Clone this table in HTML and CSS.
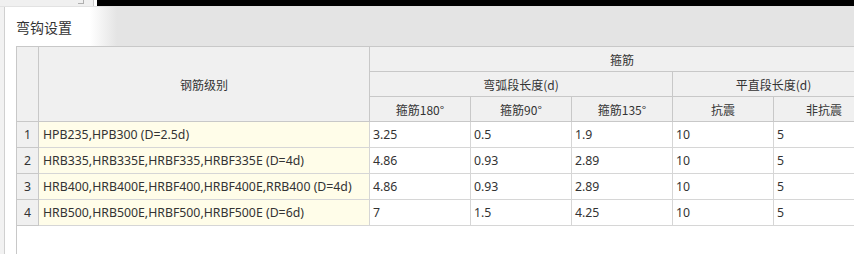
FILE: index.html
```html
<!DOCTYPE html>
<html lang="zh-CN">
<head>
<meta charset="utf-8">
<title>弯钩设置</title>
<link rel="stylesheet" href="styles.css">
</head>
<body>
<div class="topbar">
  <div class="topbar-left"><span class="topbar-mark"></span></div>
  <div class="topbar-dark"></div>
</div>
<div class="frame">
  <div class="side"></div>
  <div class="dialog">
    <div class="dialog-head"><span class="dialog-title">弯钩设置</span></div>
    <div class="grid-wrap">
      <table class="grid">
        <colgroup>
          <col class="c-num"><col class="c-name"><col class="c-val"><col class="c-val"><col class="c-val"><col class="c-val"><col class="c-val">
        </colgroup>
        <thead>
          <tr class="hrow">
            <th rowspan="3" class="hcorner"></th>
            <th rowspan="3">钢筋级别</th>
            <th colspan="5">箍筋</th>
          </tr>
          <tr class="hrow">
            <th colspan="3">弯弧段长度(d)</th>
            <th colspan="2">平直段长度(d)</th>
          </tr>
          <tr class="hrow">
            <th>箍筋180°</th>
            <th>箍筋90°</th>
            <th>箍筋135°</th>
            <th>抗震</th>
            <th>非抗震</th>
          </tr>
        </thead>
        <tbody>
          <tr><td class="num">1</td><td class="name">HPB235,HPB300 (D=2.5d)</td><td>3.25</td><td>0.5</td><td>1.9</td><td>10</td><td>5</td></tr>
          <tr><td class="num">2</td><td class="name">HRB335,HRB335E,HRBF335,HRBF335E (D=4d)</td><td>4.86</td><td>0.93</td><td>2.89</td><td>10</td><td>5</td></tr>
          <tr><td class="num">3</td><td class="name">HRB400,HRB400E,HRBF400,HRBF400E,RRB400 (D=4d)</td><td>4.86</td><td>0.93</td><td>2.89</td><td>10</td><td>5</td></tr>
          <tr><td class="num">4</td><td class="name">HRB500,HRB500E,HRBF500,HRBF500E (D=6d)</td><td>7</td><td>1.5</td><td>4.25</td><td>10</td><td>5</td></tr>
        </tbody>
      </table>
    </div>
  </div>
</div>
</body>
</html>
```

FILE: styles.css
```css
html, body {
  margin: 0;
  padding: 0;
  width: 854px;
  height: 254px;
  overflow: hidden;
  background: #ffffff;
  font-family: "Noto Sans", "Noto Sans CJK SC", sans-serif;
  color: #333333;
}

.topbar {
  display: flex;
  height: 6px;
  border-bottom: 1px solid #e2e2e2;
}

.topbar-left {
  width: 93px;
  background: #f0f0f0;
  border-right: 1px solid #c8c8c8;
  position: relative;
}

.topbar-mark {
  position: absolute;
  left: 78px;
  top: 0;
  width: 5px;
  height: 3px;
  border-bottom: 1px solid #b0b0b0;
  border-right: 1px solid #b0b0b0;
}

.topbar-dark {
  flex: 1;
  margin-left: 3px;
  background: #000000;
}

.frame {
  display: flex;
  height: 247px;
}

.side {
  width: 4px;
  background: #f2f2f2;
  border-right: 1px solid #d0d0d0;
  flex: none;
}

.dialog {
  flex: 1;
  display: flex;
  flex-direction: column;
  min-width: 0;
}

.dialog-head {
  height: 39px;
  display: flex;
  align-items: center;
  padding-left: 11px;
  background: linear-gradient(to right, #ffffff 85px, #e4e4e4 112px);
}

.dialog-title {
  font-family: "Noto Sans CJK SC", sans-serif;
  font-size: 14px;
  color: #333333;
}

.grid-wrap {
  flex: 1;
  margin-left: 11px;
  border-left: 1px solid #c8c8c8;
  border-top: 1px solid #c8c8c8;
  overflow: hidden;
}

.grid {
  border-collapse: collapse;
  table-layout: fixed;
  width: 858px;
  margin-top: -1px;
  margin-left: -1px;
  font-size: 12.3px;
}

.c-num { width: 22px; }
.c-name { width: 331px; }
.c-val { width: 101px; }

.grid th {
  background: #f0f0f0;
  border: 1px solid #c8c8c8;
  font-weight: normal;
  font-family: "Noto Sans CJK SC", sans-serif;
  font-size: 12px;
  color: #333333;
  text-align: center;
  padding: 0;
}

.hrow { height: 25px; }

.grid td {
  border: 1px solid #d6d6d6;
  height: 25px;
  padding: 0 0 0 3px;
  white-space: nowrap;
  overflow: hidden;
  color: #333333;
}

.grid td.num {
  background: #f0f0f0;
  border-color: #c8c8c8;
  text-align: center;
  padding: 0;
}

.grid td.name {
  background: #fffde9;
  padding-left: 4px;
}
```
